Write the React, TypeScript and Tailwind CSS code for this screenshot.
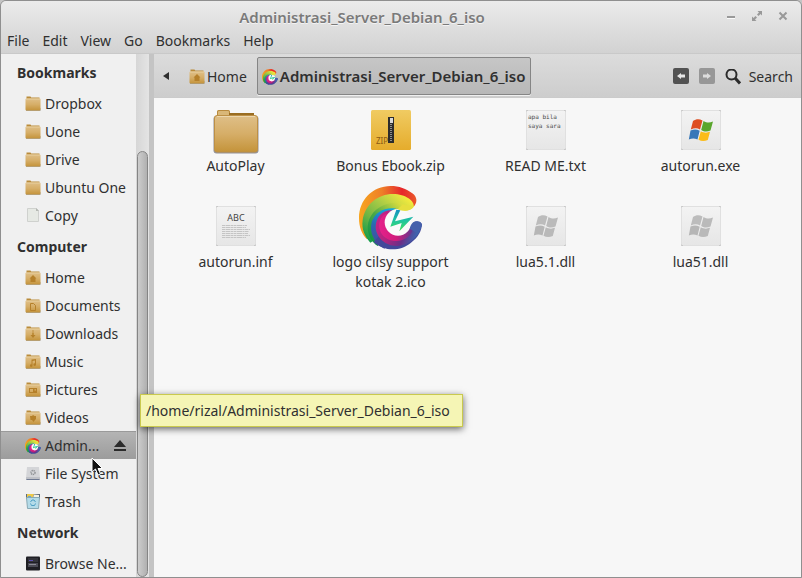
import type { ReactNode } from 'react';

const FONT = "font-['Noto_Sans','Open_Sans',sans-serif]";

/** Gradients shared by every icon on the page. */
function IconDefs() {
  return (
    <svg aria-hidden="true" className="absolute size-0">
      <defs>
        <linearGradient id="folder" x1="0" y1="0" x2="0" y2="1">
          <stop offset="0" stopColor="#dfbf88" />
          <stop offset="0.5" stopColor="#d6ae68" />
          <stop offset="1" stopColor="#c4933a" />
        </linearGradient>
        <linearGradient id="paper" x1="0" y1="0" x2="0" y2="1">
          <stop offset="0" stopColor="#f3f3f3" />
          <stop offset="1" stopColor="#e6e6e6" />
        </linearGradient>
        <linearGradient id="zip" x1="0" y1="0" x2="0" y2="1">
          <stop offset="0" stopColor="#f0cb62" />
          <stop offset="1" stopColor="#e5ac2c" />
        </linearGradient>
        <linearGradient id="warm" x1="0" y1="0" x2="1" y2="0">
          <stop offset="0" stopColor="#f7a61f" />
          <stop offset="0.4" stopColor="#ee7f28" />
          <stop offset="0.75" stopColor="#e6262b" />
          <stop offset="1" stopColor="#ea5a2a" />
        </linearGradient>
        <linearGradient id="lime" x1="0.1" y1="1" x2="0.9" y2="0.1">
          <stop offset="0" stopColor="#0a9a4c" />
          <stop offset="0.35" stopColor="#6fb544" />
          <stop offset="0.65" stopColor="#a9cb45" />
          <stop offset="1" stopColor="#f4ea3e" />
        </linearGradient>
        <linearGradient id="leaf" x1="0.1" y1="1" x2="0.9" y2="0.1">
          <stop offset="0" stopColor="#079247" />
          <stop offset="0.5" stopColor="#4aa847" />
          <stop offset="1" stopColor="#e2e03e" />
        </linearGradient>
        <linearGradient id="sea" x1="0.6" y1="0" x2="0.3" y2="1">
          <stop offset="0" stopColor="#12a6dd" />
          <stop offset="0.5" stopColor="#2b69b0" />
          <stop offset="1" stopColor="#474a9c" />
        </linearGradient>
        <linearGradient id="berry" x1="0" y1="0" x2="1" y2="0.3">
          <stop offset="0" stopColor="#c92389" />
          <stop offset="0.4" stopColor="#b3247f" />
          <stop offset="0.75" stopColor="#6a2f88" />
          <stop offset="1" stopColor="#3f63ad" />
        </linearGradient>
        <linearGradient id="plum" x1="0" y1="0" x2="1" y2="0">
          <stop offset="0" stopColor="#e5218a" />
          <stop offset="0.5" stopColor="#d01c7c" />
          <stop offset="1" stopColor="#5a3a92" />
        </linearGradient>
        <linearGradient id="bolt" x1="0" y1="0" x2="0" y2="1">
          <stop offset="0" stopColor="#168fc0" />
          <stop offset="0.5" stopColor="#1fc4a0" />
          <stop offset="1" stopColor="#45e05a" />
        </linearGradient>
      </defs>
    </svg>
  );
}

function CilsyLogo({ className }: { className: string }) {
  return (
    <svg viewBox="0 0 192 192" aria-hidden="true" className={className}>
      <path
        fill="url(#warm)"
        d="M166 60C176 48 174 32 160 22C142 8 120 0 95 0C40 0 0 42 0 96C0 122 8 144 24 160L60 120L100 60Z"
      />
      <path
        fill="url(#lime)"
        d="M164 62C168 46 140 24 102 24C56 24 18 56 11 102C7 130 18 152 34 170L66 150L90 100L118 70C136 76 154 74 164 62Z"
      />
      <path
        fill="url(#leaf)"
        d="M154 69C140 52 112 46 84 54C50 64 28 90 26 122C26 148 38 168 56 180L80 150L86 92C94 76 110 68 126 71C138 74 148 73 154 69Z"
      />
      <path
        fill="url(#sea)"
        d="M112 68C78 62 48 78 38 108C30 140 46 172 76 188L104 160L76 100C82 84 96 74 112 68Z"
      />
      <path
        fill="#42489a"
        d="M44 168C76 198 126 196 156 170C178 154 188 134 189 114C184 108 176 106 170 108L120 160L60 150Z"
      />
      <path
        fill="url(#berry)"
        d="M98 73C70 72 50 94 50 124C52 158 84 182 116 180C152 178 182 150 188 118C186 106 168 102 162 114C150 140 126 152 106 146Z"
      />
      <path
        fill="url(#plum)"
        d="M86 82C62 88 54 118 66 140C82 168 122 172 146 154C156 146 162 134 164 122L162 112C150 138 126 150 106 144Z"
      />
      <circle cx="117" cy="109" r="40" fill="#fafafa" />
      {/* Upper jaw and lower tip close over the hole */}
      <path fill="#e6df3e" d="M116 70C136 78 156 76 166 60L130 56Z" />
      <path fill="#4560ab" d="M152 128C156 112 164 104 176 106C186 107 190 114 188 120L172 140Z" />
      <path fill="url(#bolt)" d="M112 71L124 73L108 106L163 92L121 136L128 111L94 122Z" />
    </svg>
  );
}

type Emblem = 'home' | 'documents' | 'downloads' | 'music' | 'pictures' | 'videos';

const emblems: Record<Emblem, ReactNode> = {
  home: <path d="M8 5L4.500 8.500H5.500V12H10.500V8.500H11.500Z" />,
  documents: <path fill="none" stroke="#b5802a" d="M5.500 5.500H8.500L10.500 7.500V12.500H5.500Z" />,
  downloads: <path d="M7.300 4.500H8.700V5.500H7.300ZM7.300 6.500H8.700V9H10.500L8 12L5.500 9H7.300Z" />,
  music: <path d="M6.500 5.500L11 5V10.500A1.300 1.300 0 1 1 10 9.400V6.500L7.500 7V11.500A1.300 1.300 0 1 1 6.500 10.400Z" />,
  pictures: <path fillRule="evenodd" d="M4 6H12V11H4ZM5 7V10H8V7ZM9.500 7.200V8.500H11V7.200Z" />,
  videos: <path d="M5 6H7L8 5L9.500 6H11V9L10 10L8.500 12L7 10H5.500Z" />,
};

function SmallFolder({ emblem }: { emblem?: Emblem }) {
  return (
    <svg viewBox="0 0 16 16" aria-hidden="true" className="size-4 shrink-0">
      <path fill="#8d8b86" opacity="0.7" d="M1 12H15.500V15H1Z" />
      <path fill="#b98b3b" d="M1.500 0.500H5.500L6.200 1.500H14.500V4H1.500Z" />
      <rect x="0.500" y="2.500" width="15" height="12" rx="1" fill="url(#folder)" />
      <path stroke="#e8cf9f" d="M1 3H15" />
      {emblem && <g fill="#b5802a">{emblems[emblem]}</g>}
    </svg>
  );
}

function BlankDocument() {
  return (
    <svg viewBox="0 0 16 16" aria-hidden="true" className="size-4 shrink-0">
      <path fill="#e6e9e4" stroke="#cfd1ce" d="M2.500 0.500H11.500L13.500 2.500V13.500H2.500Z" />
      <path fill="#b5b8b3" d="M11 0L14 3H11Z" />
    </svg>
  );
}

function DriveIcon() {
  return (
    <svg viewBox="0 0 16 16" aria-hidden="true" className="size-4 shrink-0">
      <path fill="#d4d5d8" d="M2 1H14L15 12H1Z" />
      <rect x="1" y="11" width="14" height="3" rx="0.500" fill="#bfc1c6" />
      <path stroke="#6f7a92" d="M1.500 13.500H14.500" />
      <circle cx="8" cy="6.500" r="2" fill="none" stroke="#8f9194" strokeWidth="1.500" strokeDasharray="1.200 0.600" />
    </svg>
  );
}

function TrashIcon() {
  return (
    <svg viewBox="0 0 16 16" aria-hidden="true" className="size-4 shrink-0">
      <path fill="#5e6b78" d="M1 0H15V5H1Z" />
      <path fill="#ecc84a" d="M2 0H9L8 3H2Z" />
      <path fill="#f3f1e4" d="M9 0.500L14 1V4H8Z" />
      <path fill="#6aa5cf" d="M3 2H6V4H3Z" />
      <path fill="#b4dbe8" stroke="#87a9b5" d="M1.500 3.500H14.500L13.500 14.500H2.500Z" />
      <path fill="none" stroke="#4f9fc4" d="M5.500 8L7 6H9L10.500 8M10.500 9.500L9.500 11.500H6.500L5.500 9.500" />
    </svg>
  );
}

function NetworkIcon() {
  return (
    <svg viewBox="0 0 16 16" aria-hidden="true" className="size-4 shrink-0">
      <rect x="1" y="0.500" width="14" height="14" rx="1" fill="#1f1f24" />
      <path fill="#33333a" d="M3 2H13V6H3Z" />
      <path fill="#4a4a54" d="M3 7H13V11H3Z" />
      <path stroke="#5a50b0" d="M4 4.500H8" />
      <path stroke="#8a8a94" d="M4 8.500H11" />
    </svg>
  );
}

function EjectIcon() {
  return (
    <svg viewBox="0 0 12 12" aria-hidden="true" className="size-3">
      <path fill="#2b2b2b" d="M6 0L12 7H0ZM0 9H12V11H0Z" />
    </svg>
  );
}

type Place = { label: string; icon: ReactNode; active?: boolean };

const sections: { title: string; places: Place[] }[] = [
  {
    title: 'Bookmarks',
    places: [
      { label: 'Dropbox', icon: <SmallFolder /> },
      { label: 'Uone', icon: <SmallFolder /> },
      { label: 'Drive', icon: <SmallFolder /> },
      { label: 'Ubuntu One', icon: <SmallFolder /> },
      { label: 'Copy', icon: <BlankDocument /> },
    ],
  },
  {
    title: 'Computer',
    places: [
      { label: 'Home', icon: <SmallFolder emblem="home" /> },
      { label: 'Documents', icon: <SmallFolder emblem="documents" /> },
      { label: 'Downloads', icon: <SmallFolder emblem="downloads" /> },
      { label: 'Music', icon: <SmallFolder emblem="music" /> },
      { label: 'Pictures', icon: <SmallFolder emblem="pictures" /> },
      { label: 'Videos', icon: <SmallFolder emblem="videos" /> },
      { label: 'Admin...', icon: <CilsyLogo className="size-4 shrink-0" />, active: true },
      { label: 'File System', icon: <DriveIcon /> },
      { label: 'Trash', icon: <TrashIcon /> },
    ],
  },
  { title: 'Network', places: [{ label: 'Browse Ne...', icon: <NetworkIcon /> }] },
];

function Sidebar() {
  return (
    <nav aria-label="Places" className="w-[135px] shrink-0 overflow-hidden bg-[#f0f0f0] pt-px">
      {sections.map((section) => (
        <section key={section.title}>
          <h2 className="flex h-[34px] items-center pt-0.5 pl-4 font-bold">{section.title}</h2>
          <ul>
            {section.places.map((place) => (
              <li
                key={place.label}
                className={
                  place.active
                    ? 'flex h-7 items-center border-t border-[#9a9a9a] bg-linear-to-b from-[#b4b4b4] to-[#9c9c9c] pr-2.5'
                    : 'flex h-7 items-center pt-0.5'
                }
              >
                <button type="button" className="flex min-w-0 flex-1 items-center gap-1 pl-6 whitespace-nowrap">
                  {place.icon}
                  {place.label}
                </button>
                {place.active && (
                  <button type="button" aria-label="Eject">
                    <EjectIcon />
                  </button>
                )}
              </li>
            ))}
          </ul>
        </section>
      ))}
    </nav>
  );
}

function BigFolder() {
  return (
    <svg viewBox="0 0 48 48" aria-hidden="true" className="size-12">
      <path fill="#b88a3e" d="M5 5.500Q5 4 6.500 4H16.500Q18 4 18 5.500V7H42V11H5Z" />
      <path fill="#d9b778" d="M6 6Q6 5 7 5H16Q17 5 17 6V9H6Z" />
      <path fill="#9a6d22" d="M17 7H42V10H17Z" />
      <rect x="1.500" y="10" width="45" height="37.500" rx="3" fill="#73717a" opacity="0.750" />
      <rect x="2.500" y="9.500" width="43" height="36.500" rx="2.500" fill="url(#folder)" stroke="#bd9046" />
      <path stroke="#ecd7ae" d="M5 10.500H43" />
    </svg>
  );
}

function ZipIcon() {
  return (
    <svg viewBox="0 0 40 40" aria-hidden="true" className="mb-1 size-10">
      <rect width="40" height="40" rx="1.500" fill="url(#zip)" />
      <text x="5" y="34" fontSize="8" fill="#8a5a14">
        ZIP
      </text>
      <rect x="17" y="7" width="6" height="26" fill="#2c2c2c" />
      <rect x="19" y="8" width="3" height="5" fill="#d8d8d8" />
      <path stroke="#8f8f8f" strokeWidth="2" strokeDasharray="1 1" d="M20 14V31" />
    </svg>
  );
}

function PaperIcon({ children }: { children: ReactNode }) {
  return (
    <svg viewBox="0 0 40 40" aria-hidden="true" className="mb-1 size-10">
      <rect x="0.500" y="0.500" width="39" height="39" rx="1" fill="url(#paper)" stroke="#e0e0e0" />
      <path fill="none" stroke="#adadad" d="M0 1.500L1.500 0M38.500 0L40 1.500M0 38.500L1.500 40M38.500 40L40 38.500" />
      {children}
    </svg>
  );
}

function WindowsFlag({ muted }: { muted?: boolean }) {
  const [red, green, blue, yellow] = muted
    ? ['#bcbcbc', '#bababa', '#b6b6b6', '#b9b9b9']
    : ['#de4d20', '#5aa62c', '#3878b8', '#fbbc1a'];
  return (
    <PaperIcon>
      <path fill={red} d="M12 11C15 9 18 8.500 21.500 10.500L19 19.500C16 17.500 13 18 9.800 19.500Z" />
      <path fill={green} d="M22.500 11C26 13 28.500 13 32 11.500L29.500 20.500C26 22 23.500 22 20.200 20Z" />
      <path fill={blue} d="M9.500 20.500C13 19 15.500 19 18.700 20.700L16.500 29.500C13.500 28 11 28 7.800 29.500Z" />
      <path fill={yellow} d="M19.800 21.200C23 23 26 23 29 21.800L26.800 30C23.500 31.500 20.500 31.500 17.500 29.800Z" />
    </PaperIcon>
  );
}

function ReadmeIcon() {
  return (
    <PaperIcon>
      <g fontSize="6" fill="#4a4a4a" className="font-['DejaVu_Sans_Mono',monospace]">
        <text x="2" y="9">apa bila</text>
        <text x="2" y="18">saya sara</text>
      </g>
    </PaperIcon>
  );
}

function AbcIcon() {
  return (
    <PaperIcon>
      <text x="20" y="15" fontSize="9" textAnchor="middle" fill="#444444">
        ABC
      </text>
      <g stroke="#c4c4c4" strokeDasharray="3 0.500 5 0.500 2 0.500">
        <path d="M6 19.500H31M6 21.500H30M6 23.500H34M6 25.500H33M6 27.500H32M6 29.500H34M6 31.500H30" />
      </g>
    </PaperIcon>
  );
}

const files: { name: string; icon: ReactNode }[] = [
  { name: 'AutoPlay', icon: <BigFolder /> },
  { name: 'Bonus Ebook.zip', icon: <ZipIcon /> },
  { name: 'READ ME.txt', icon: <ReadmeIcon /> },
  { name: 'autorun.exe', icon: <WindowsFlag /> },
  { name: 'autorun.inf', icon: <AbcIcon /> },
  { name: 'logo cilsy support kotak 2.ico', icon: <CilsyLogo className="size-16" /> },
  { name: 'lua5.1.dll', icon: <WindowsFlag muted /> },
  { name: 'lua51.dll', icon: <WindowsFlag muted /> },
];

function FileGrid() {
  return (
    <ul className="-mt-2 grid flex-1 grid-cols-[repeat(auto-fill,155px)] content-start gap-y-2.5 pl-1">
      {files.map((file) => (
        <li key={file.name} className="flex flex-col items-center gap-0.5">
          <div className="flex min-h-16 items-end">{file.icon}</div>
          <span className="max-w-[132px] text-center leading-5">{file.name}</span>
        </li>
      ))}
    </ul>
  );
}

function Toolbar() {
  return (
    <div className="flex h-11 shrink-0 items-center border-b border-[#cbcbcb] bg-linear-to-b from-[#dcdcdc] to-[#cdcdcd] pr-2 pl-[9px]">
      <button type="button" aria-label="Scroll path left" className="mr-5">
        <svg viewBox="0 0 6 8" aria-hidden="true" className="h-2 w-1.5">
          <path fill="#2f2f2f" d="M6 0V8L0 4Z" />
        </svg>
      </button>
      <button type="button" className="flex items-center gap-0.5 pt-0.5">
        <SmallFolder emblem="home" />
        Home
      </button>
      <button
        type="button"
        aria-pressed="true"
        className="ml-2.5 flex h-[38px] items-center gap-0.5 rounded-xs border border-[#858585] bg-linear-to-b from-[#c6c6c6] to-[#b8b8b8] px-1 pt-0.5 text-[15px] font-semibold whitespace-nowrap shadow-[0_1px_0_#f0f0f0]"
      >
        <CilsyLogo className="size-4 shrink-0" />
        Administrasi_Server_Debian_6_iso
      </button>
      <div className="ml-auto flex items-center">
        <button type="button" aria-label="Back" className="mr-2.5 grid size-4 place-items-center rounded-xs bg-[#525252]">
          <svg viewBox="0 0 8 6" aria-hidden="true" className="h-1.5 w-2">
            <path fill="#e6e6e6" d="M0 3L4 0V1.500H8V4.500H4V6Z" />
          </svg>
        </button>
        <button type="button" aria-label="Forward" className="mr-2.5 grid size-4 place-items-center rounded-xs bg-[#979797]">
          <svg viewBox="0 0 8 6" aria-hidden="true" className="h-1.5 w-2">
            <path fill="#dddddd" d="M8 3L4 0V1.500H0V4.500H4V6Z" />
          </svg>
        </button>
        <button type="button" className="flex items-center gap-2 pt-0.5">
          <svg viewBox="0 0 16 16" aria-hidden="true" className="size-4">
            <circle cx="6.500" cy="5.500" r="5" fill="none" stroke="#2b2b2b" strokeWidth="2" />
            <path stroke="#2b2b2b" strokeWidth="3" d="M10 9L15 14.500" />
          </svg>
          Search
        </button>
      </div>
    </div>
  );
}

function TitleBar() {
  return (
    <header className="h-[53px] shrink-0 border-b border-[#c9c9c9] bg-linear-to-b from-[#ebebeb] to-[#d2d2d2]">
      <div className="grid h-[30px] grid-cols-[1fr_auto_1fr] items-center">
        <h1 className="col-start-2 -ml-[78px] pt-1 text-[15px] font-semibold text-[#7a7a7a] [text-shadow:0_1px_0_#f4f4f4]">
          Administrasi_Server_Debian_6_iso
        </h1>
        <div className="flex justify-end gap-4 pr-[13px]">
          <button type="button" aria-label="Minimize">
            <svg viewBox="0 0 10 10" aria-hidden="true" className="size-2.5">
              <path stroke="#999999" strokeWidth="2" d="M1 6H9" />
              <path stroke="#fafafa" d="M1 7.500H9" />
            </svg>
          </button>
          <button type="button" aria-label="Maximize">
            <svg viewBox="0 0 10 10" aria-hidden="true" className="size-2.5">
              <path fill="#999999" d="M5.500 0H10V4.500L8.500 3L6.500 5L5 3.500L7 1.500ZM0 5.500V10H4.500L3 8.500L5 6.500L3.500 5L1.500 7Z" />
            </svg>
          </button>
          <button type="button" aria-label="Close">
            <svg viewBox="0 0 10 10" aria-hidden="true" className="size-2.5">
              <path stroke="#999999" strokeWidth="2" d="M1.500 1.500L8.500 8.500M8.500 1.500L1.500 8.500" />
            </svg>
          </button>
        </div>
      </div>
      <div role="menubar" className="flex h-5 items-center gap-[13px] pl-1.5">
        {['File', 'Edit', 'View', 'Go', 'Bookmarks', 'Help'].map((item) => (
          <button key={item} type="button" role="menuitem">
            {item}
          </button>
        ))}
      </div>
    </header>
  );
}

export default function App() {
  return (
    <div className={`${FONT} h-screen bg-[#c4c4c4] text-sm text-[#303030]`}>
      <IconDefs />
      <div className="relative flex h-full flex-col overflow-hidden rounded-t-md border border-[#8f8f8f]">
        <TitleBar />
        <div className="flex min-h-0 flex-1">
          <Sidebar />
          {/* Scrollbar */}
          <div className="flex w-[13px] shrink-0 flex-col bg-linear-to-r from-[#d6d6d6] to-[#e4e4e4] px-px pt-[97px]">
            <div className="flex-1 rounded-full border border-[#858585] bg-linear-to-r from-[#cdcdcd] to-[#b0b0b0]" />
          </div>
          <div className="w-[5px] shrink-0 bg-[#c4c4c4]" />
          <main className="flex min-w-0 flex-1 flex-col bg-[#f7f7f7]">
            <Toolbar />
            <FileGrid />
          </main>
        </div>

        <div
          role="tooltip"
          className="absolute top-[393px] left-[139px] flex h-[33px] items-center border border-[#c9c94e] bg-[#f5f5b5] pr-3 pl-[5px] whitespace-nowrap shadow-[0_2px_7px_rgba(0,0,0,0.6)]"
        >
          /home/rizal/Administrasi_Server_Debian_6_iso
        </div>
        <svg viewBox="0 0 12 19" aria-hidden="true" className="absolute top-[456px] left-[90px] h-[19px] w-3">
          <path fill="#111111" stroke="#ffffff" d="M1 1V15L4.500 12L7 18L9.500 17L7 11.500H11.500Z" />
        </svg>
      </div>
    </div>
  );
}
